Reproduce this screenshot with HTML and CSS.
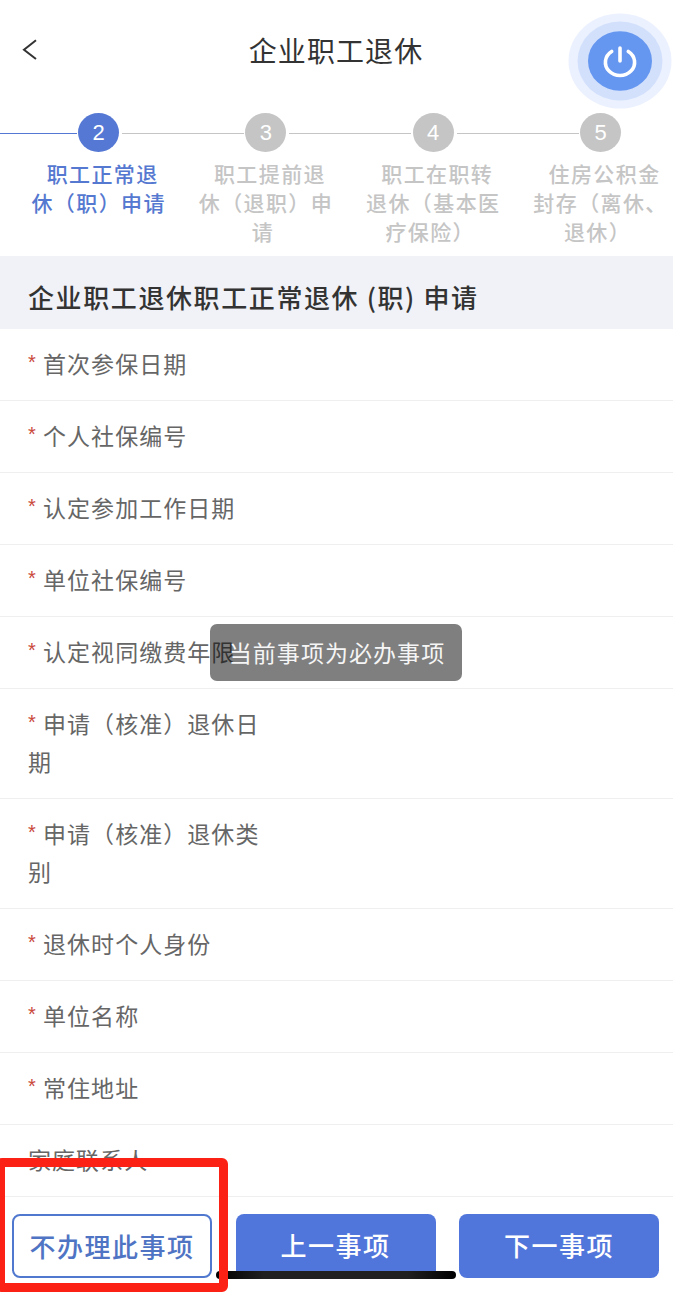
FILE: index.html
```html
<!DOCTYPE html>
<html lang="zh-CN">
<head>
<meta charset="utf-8">
<meta name="viewport" content="width=device-width, initial-scale=1">
<title>企业职工退休</title>
<link rel="stylesheet" href="styles.css">
</head>
<body>
<div class="page">
  <header class="navbar">
    <svg class="back" viewBox="0 0 16 22" width="16" height="22"><path d="M14 1.2 2 10.7l12 9.3"/></svg>
    <h1 class="title">企业职工退休</h1>
    <svg class="power" viewBox="0 0 104 96" width="104" height="96">
      <ellipse class="halo-outer" cx="52" cy="48" rx="51.5" ry="47.5"/>
      <ellipse class="halo-inner" cx="52" cy="48" rx="42.5" ry="39.5"/>
      <ellipse class="disc" cx="52" cy="48" rx="32" ry="29.8"/>
      <path class="glyph" d="M43.7 38.5A14.6 13.2 0 1 0 60.3 38.5M52 35v13"/>
    </svg>
  </header>

  <ol class="steps">
    <li class="step active"><span class="num">2</span><p class="label"><span class="first">职工正常退</span><span>休（职）申请</span></p></li>
    <li class="step"><span class="num">3</span><p class="label"><span class="first">职工提前退</span><span>休（退职）申</span><span class="last">请</span></p></li>
    <li class="step"><span class="num">4</span><p class="label"><span class="first">职工在职转</span><span>退休（基本医</span><span class="last">疗保险）</span></p></li>
    <li class="step"><span class="num">5</span><p class="label"><span class="first">住房公积金</span><span>封存（离休、</span><span class="last">退休）</span></p></li>
  </ol>

  <h2 class="section">企业职工退休职工正常退休 (职) 申请</h2>

  <ul class="fields">
    <li class="field"><i>*</i>首次参保日期</li>
    <li class="field"><i>*</i>个人社保编号</li>
    <li class="field"><i>*</i>认定参加工作日期</li>
    <li class="field"><i>*</i>单位社保编号</li>
    <li class="field"><i>*</i>认定视同缴费年限</li>
    <li class="field"><i>*</i>申请（核准）退休日<br>期</li>
    <li class="field"><i>*</i>申请（核准）退休类<br>别</li>
    <li class="field"><i>*</i>退休时个人身份</li>
    <li class="field"><i>*</i>单位名称</li>
    <li class="field"><i>*</i>常住地址</li>
    <li class="field">家庭联系人</li>
  </ul>

  <footer class="actions">
    <button class="btn outline">不办理此事项</button>
    <button class="btn">上一事项</button>
    <button class="btn">下一事项</button>
  </footer>

  <div class="toast">当前事项为必办事项</div>
  <div class="home-bar"></div>
  <div class="highlight"></div>
</div>
</body>
</html>
```
FILE: styles.css
```css
* { box-sizing: border-box; margin: 0; padding: 0; }
body {
  background: #fff;
  font-family: "Noto Sans CJK SC", sans-serif;
  color: #333;
}
.page {
  position: relative;
  width: 673px;
  height: 1292px;
  overflow: hidden;
}
ol, ul { list-style: none; }

.navbar {
  display: grid;
  grid-template-columns: 104px 1fr 104px;
  height: 113px;
  padding: 0 1px 0 0;
}
.back { margin: 39px 0 0 22px; fill: none; stroke: #333; stroke-width: 2; }
.title {
  padding-top: 30px;
  font-size: 28px;
  line-height: 40px;
  letter-spacing: 1.1px;
  font-weight: 400;
  text-align: center;
}
.power { margin-top: 13px; }
.halo-outer { fill: #ebf1fe; }
.halo-inner { fill: #d2e0fc; }
.disc { fill: #6596f0; }
.glyph { fill: none; stroke: #fff; stroke-width: 3.6; stroke-linecap: round; }

.steps {
  display: grid;
  grid-template-columns: repeat(4, 167.3px);
  height: 143px;
  padding-left: 15px;
}
.step { color: #c5c5c5; display: flex; flex-direction: column; align-items: center; position: relative; }
.step::before {
  content: "";
  position: absolute;
  top: 20px;
  right: calc(50% + 22px);
  width: 122px;
  height: 1px;
  background: #c5c5c5;
}
.num {
  width: 41px;
  height: 39px;
  border-radius: 50%;
  background: #c5c5c5;
  color: #fff;
  font: 22px/40px "Liberation Sans", Arial, sans-serif;
  text-align: center;
}
.label {
  margin-top: 7px;
  font-size: 21px;
  line-height: 29px;
  letter-spacing: 1.4px;
  font-weight: 500;
  text-align: center;
  white-space: nowrap;
}
.label span { display: block; }
.label .first { padding-left: 8px; }
.label .last { padding-right: 6px; }
.step.active { color: #5578d0; }
.active .num, .step.active::before { background: #5578d4; }

.section {
  height: 73px;
  padding-left: 28px;
  background: #f1f2f7;
  font-size: 26px;
  line-height: 82px;
  letter-spacing: 1.6px;
  font-weight: 500;
  white-space: nowrap;
}

.field {
  padding: 15px 28px 18px;
  border-bottom: 1px solid #efefef;
  color: #666;
  font-size: 23px;
  line-height: 38px;
  letter-spacing: 1.05px;
}
.field i {
  display: inline-block;
  width: 15px;
  color: #c9483c;
  font: 20px/20px "Liberation Sans", Arial, sans-serif;
  vertical-align: 4px;
}

.actions {
  display: grid;
  grid-template-columns: repeat(3, 200px);
  gap: 23.5px;
  padding: 17px 12px 0;
}
.btn {
  height: 64px;
  padding-bottom: 3px;
  border: 0;
  border-radius: 8px;
  background: #5076dc;
  color: #fff;
  font: 500 26px/60px "Noto Sans CJK SC", sans-serif;
  letter-spacing: 1.5px;
}
.btn.outline {
  padding-bottom: 1px;
  border: 2px solid #5078cf;
  background: #fff;
  color: #5074c4;
}

.toast {
  position: absolute;
  left: 210px;
  top: 624px;
  width: 252px;
  height: 57px;
  padding-left: 2px;
  border-radius: 7px;
  background: rgba(0, 0, 0, .5);
  color: #f5f5f5;
  font-size: 23px;
  line-height: 57px;
  letter-spacing: 1.05px;
  text-align: center;
}
.home-bar {
  position: absolute;
  left: 216px;
  top: 1271px;
  width: 240px;
  height: 8px;
  border-radius: 4px;
  background: linear-gradient(90deg, #000, #202020 20%, #202020 80%, #000);
}
.highlight {
  position: absolute;
  left: -4px;
  top: 1158px;
  width: 232px;
  height: 134px;
  border: 9px solid #fb2114;
  border-radius: 6px;
}
```
